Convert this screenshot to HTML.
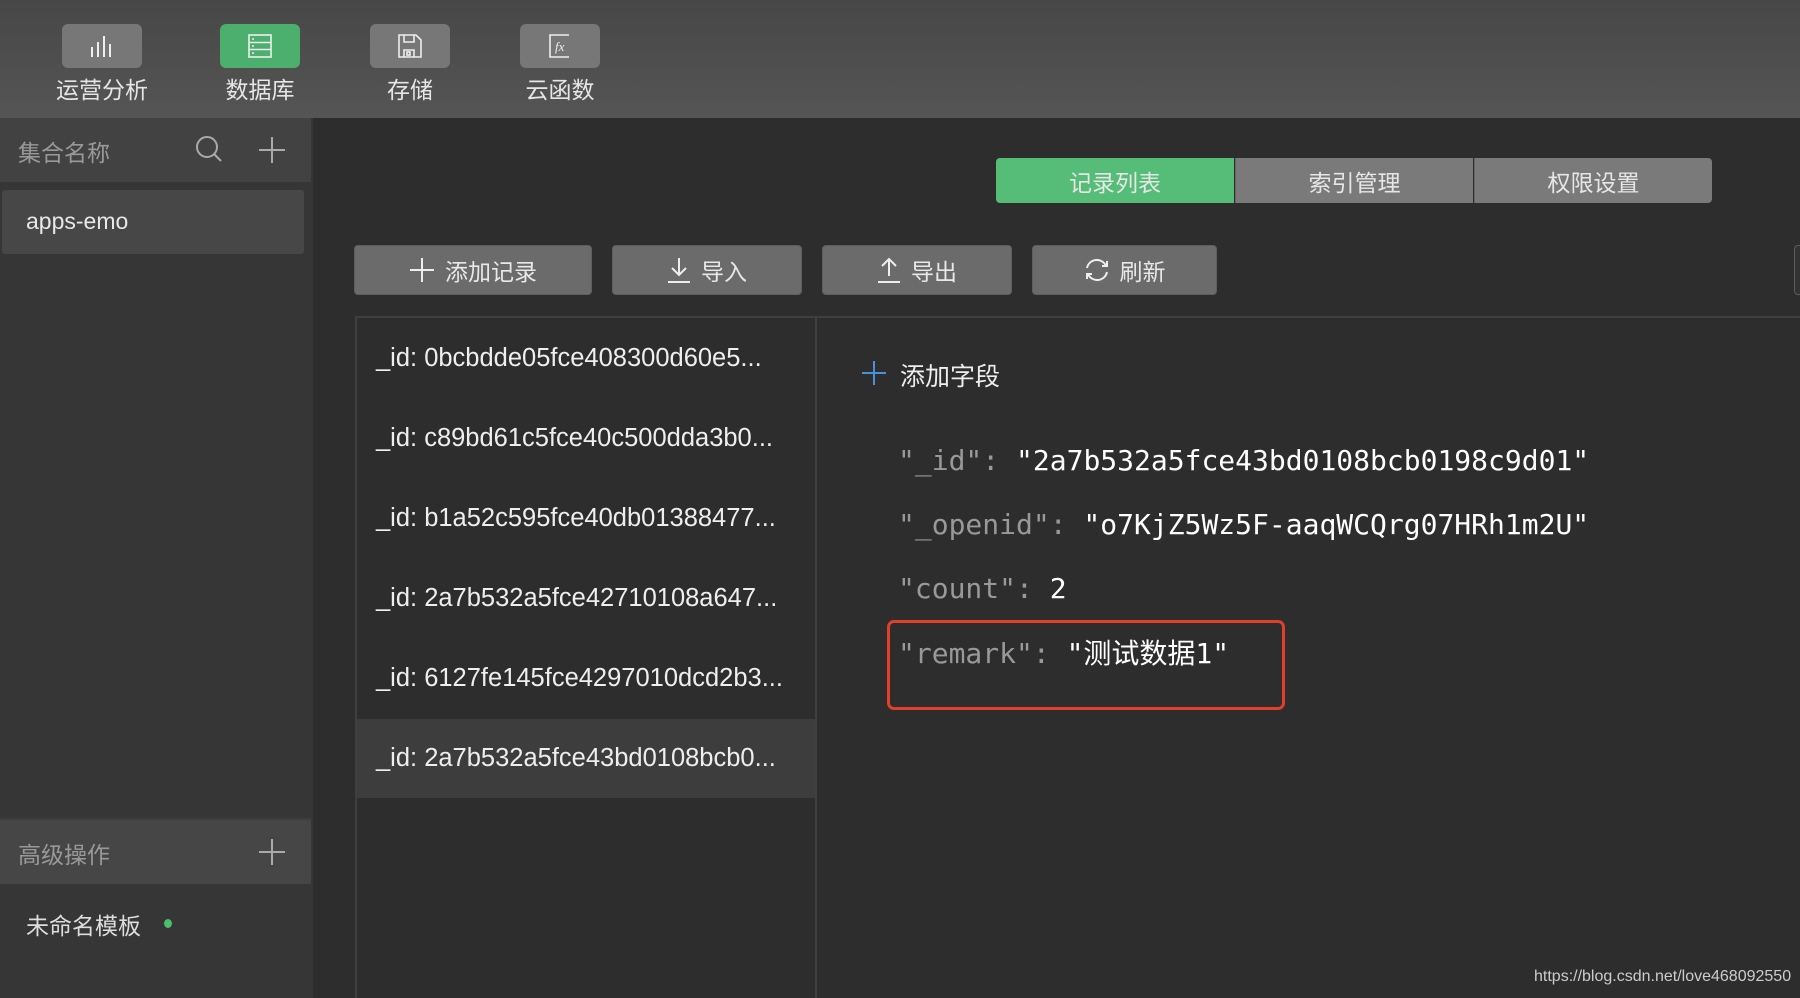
<!DOCTYPE html>
<html><head><meta charset="utf-8"><style>
*{margin:0;padding:0;box-sizing:border-box}
body{width:1800px;height:998px;background:#2d2d2d;position:relative;overflow:hidden;font-family:"Liberation Sans","Noto Sans CJK SC",sans-serif;color:#ddd}
.a{position:absolute}
.top{left:0;top:0;width:1800px;height:118px;background:linear-gradient(#474747,#555)}
.ib{width:80px;height:44px;border-radius:6px;background:#777;top:24px;display:flex;align-items:center;justify-content:center}
.lb{top:71px;width:140px;text-align:center;font-size:23px;color:#e6e6e6}
.side{left:0;top:118px;width:313px;height:880px;background:#363636}
.btn{top:245px;height:50px;background:#6b6b6b;border:1px solid #5e5e5e;border-radius:4px;display:flex;align-items:center;justify-content:center;font-size:23px;color:#e8e8e8;gap:10px}
.tab{top:158px;height:45px;width:238px;display:flex;align-items:center;justify-content:center;font-size:23px;color:#e6e6e6;background:#7a7a7a}
.li{left:376px;font-size:25.5px;color:#eee;white-space:nowrap}
.f{left:898px;font-family:"DejaVu Sans Mono","Liberation Mono","Noto Sans CJK SC",monospace;font-size:28px;color:#fff;white-space:nowrap;letter-spacing:0}
.k{color:#999}
</style></head><body>
<div class="a top"></div>
<div class="a ib" style="left:62px"><svg width="26" height="26" viewBox="0 0 26 26" stroke="#eee" stroke-width="2"><path d="M3 24V14M9 24V9M15 24V3M21 24V11"/></svg></div>
<div class="a ib" style="left:220px;background:#4caf6e"><svg width="26" height="26" viewBox="0 0 26 26" fill="none" stroke="#eee" stroke-width="1.6"><rect x="2" y="2" width="22" height="22"/><path d="M2 9.5H24M2 16.5H24"/><path d="M5 6h2M5 13h2M5 20h2"/></svg></div>
<div class="a ib" style="left:370px"><svg width="26" height="26" viewBox="0 0 26 26" fill="none" stroke="#eee" stroke-width="1.6"><path d="M2 2H19L24 7V24H2Z"/><path d="M7 2V9H17V2M7 24V17H17V24"/><rect x="10" y="19" width="3" height="3"/></svg></div>
<div class="a ib" style="left:520px"><svg width="26" height="26" viewBox="0 0 26 26" fill="none" stroke="#eee" stroke-width="1.6"><path d="M22 2H3V24H22"/><text x="8" y="18" font-size="13" font-style="italic" fill="#eee" stroke="none" font-family="Liberation Serif">fx</text></svg></div>
<div class="a lb" style="left:32px">运营分析</div>
<div class="a lb" style="left:190px">数据库</div>
<div class="a lb" style="left:340px">存储</div>
<div class="a lb" style="left:490px">云函数</div>

<div class="a side"></div>
<div class="a" style="left:0;top:118px;width:311px;height:64px;background:#424242"></div>
<div class="a" style="left:18px;top:134px;font-size:23px;color:#999">集合名称</div>
<svg class="a" style="left:195px;top:135px" width="30" height="30" viewBox="0 0 30 30" fill="none" stroke="#aaa" stroke-width="2"><circle cx="12" cy="12" r="10"/><path d="M19 19L26 26"/></svg>
<svg class="a" style="left:258px;top:136px" width="28" height="28" stroke="#aaa" stroke-width="2"><path d="M14 1V27M1 14H27"/></svg>
<div class="a" style="left:2px;top:190px;width:302px;height:64px;background:#474747;border-radius:3px"></div>
<div class="a" style="left:26px;top:208px;font-size:23px;color:#e8e8e8">apps-emo</div>
<div class="a" style="left:0;top:818px;width:311px;height:66px;background:#464646;border-top:2px solid #3e3e3e"></div>
<div class="a" style="left:18px;top:836px;font-size:23px;color:#999">高级操作</div>
<svg class="a" style="left:258px;top:838px" width="28" height="28" stroke="#aaa" stroke-width="2"><path d="M14 1V27M1 14H27"/></svg>
<div class="a" style="left:26px;top:907px;font-size:23px;color:#ddd">未命名模板</div>
<div class="a" style="left:164px;top:919px;width:8px;height:9px;border-radius:50%;background:#4cbf6a"></div>

<div class="a tab" style="left:996px;background:#55bd78;border-radius:4px 0 0 4px">记录列表</div>
<div class="a tab" style="left:1235px;border-left:1px solid #666">索引管理</div>
<div class="a tab" style="left:1474px;border-left:1px solid #666;border-radius:0 4px 4px 0">权限设置</div>

<div class="a btn" style="left:354px;width:238px"><svg width="26" height="26" stroke="#eee" stroke-width="2"><path d="M13 1V25M1 13H25"/></svg>添加记录</div>
<div class="a btn" style="left:612px;width:190px"><svg width="24" height="26" fill="none" stroke="#eee" stroke-width="2"><path d="M12 1V18M5 11L12 18L19 11M1 25H23"/></svg>导入</div>
<div class="a btn" style="left:822px;width:190px"><svg width="24" height="26" fill="none" stroke="#eee" stroke-width="2"><path d="M12 2V19M5 9L12 2L19 9M1 25H23"/></svg>导出</div>
<div class="a btn" style="left:1032px;width:185px"><svg width="26" height="26" fill="none" stroke="#eee" stroke-width="2"><path d="M22 9A10 10 0 0 0 3 11M4 17A10 10 0 0 0 23 15"/><path d="M18 9H23V4M8 17H3V22"/></svg>刷新</div>
<div class="a" style="left:1794px;top:245px;width:10px;height:50px;border:1px solid #5e5e5e;border-radius:4px;background:#333"></div>

<div class="a" style="left:355px;top:316px;width:1445px;height:2px;background:#3f3f3f"></div>
<div class="a" style="left:355px;top:318px;width:462px;height:680px;border-left:2px solid #3f3f3f;border-right:2px solid #3f3f3f"></div>
<div class="a" style="left:357px;top:719px;width:458px;height:79px;background:#3d3d3d"></div>
<div class="a li" style="top:344px">_id: 0bcbdde05fce408300d60e5...</div>
<div class="a li" style="top:424px">_id: c89bd61c5fce40c500dda3b0...</div>
<div class="a li" style="top:504px">_id: b1a52c595fce40db01388477...</div>
<div class="a li" style="top:584px">_id: 2a7b532a5fce42710108a647...</div>
<div class="a li" style="top:664px">_id: 6127fe145fce4297010dcd2b3...</div>
<div class="a li" style="top:744px">_id: 2a7b532a5fce43bd0108bcb0...</div>

<svg class="a" style="left:861px;top:360px" width="26" height="26" stroke="#4a90d9" stroke-width="2"><path d="M13 1V25M1 13H25"/></svg>
<div class="a" style="left:900px;top:357px;font-size:25px;color:#eee">添加字段</div>
<div class="a f" style="top:444px"><span class="k">"_id":</span> "2a7b532a5fce43bd0108bcb0198c9d01"</div>
<div class="a f" style="top:508px"><span class="k">"_openid":</span> "o7KjZ5Wz5F-aaqWCQrg07HRh1m2U"</div>
<div class="a f" style="top:572px"><span class="k">"count":</span> 2</div>
<div class="a f" style="top:632px"><span class="k">"remark":</span> "测试数据1"</div>
<div class="a" style="left:887px;top:620px;width:398px;height:90px;border:3.5px solid #e0402a;border-radius:7px"></div>

<div class="a" style="left:1534px;top:968px;font-size:16px;color:#ccc">https://blog.csdn.net/love468092550</div>
</body></html>
